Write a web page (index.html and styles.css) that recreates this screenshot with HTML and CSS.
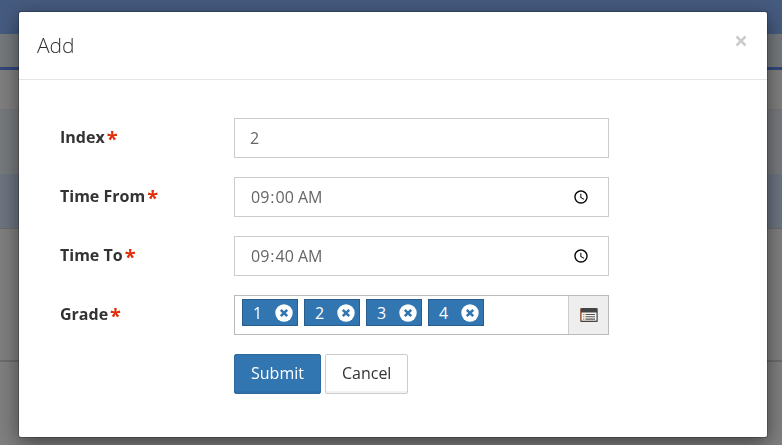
FILE: index.html
```
<!DOCTYPE html>
<html lang="en-US">
<head>
  <meta charset="UTF-8">
  <title>Add</title>
  <link rel="stylesheet" href="styles.css">
</head>
<body>
  <div class="page" aria-hidden="true">
    <div class="page-header"></div>
    <div class="page-nav"></div>
    <div class="page-row title-row"></div>
    <div class="page-row filter-row"></div>
    <div class="page-row selected-row"></div>
    <div class="page-row list-row"></div>
    <div class="page-row"></div>
  </div>

  <div class="modal" role="dialog" aria-labelledby="modal-title">
    <div class="modal-header">
      <h1 class="modal-title" id="modal-title">Add</h1>
      <button type="button" class="close" aria-label="Close">
        <svg width="12" height="12" viewBox="0 0 12 12"><path d="M1.5 1.5l9 9M10.5 1.5l-9 9" fill="none" stroke="currentColor" stroke-width="2.6"/></svg>
      </button>
    </div>

    <form class="modal-body">
      <div class="form-group">
        <label class="form-label" for="index">Index<span class="required">*</span></label>
        <input class="form-control" id="index" type="text" value="2">
      </div>
      <div class="form-group">
        <label class="form-label" for="time-from">Time From<span class="required">*</span></label>
        <input class="form-control" id="time-from" type="time" value="09:00">
      </div>
      <div class="form-group">
        <label class="form-label" for="time-to">Time To<span class="required">*</span></label>
        <input class="form-control" id="time-to" type="time" value="09:40">
      </div>
      <div class="form-group">
        <label class="form-label" for="grade">Grade<span class="required">*</span></label>
        <div class="tag-control">
          <div class="tags">
            <span class="tag">1
              <button type="button" class="tag-remove" aria-label="Remove 1"><svg width="18" height="18" viewBox="0 0 18 18"><circle cx="9" cy="9" r="8.7" fill="#fff"/><path d="M5.8 5.8l6.4 6.4M12.2 5.8l-6.4 6.4" stroke="#3276b1" stroke-width="2.6"/></svg></button>
            </span>
            <span class="tag">2
              <button type="button" class="tag-remove" aria-label="Remove 2"><svg width="18" height="18" viewBox="0 0 18 18"><circle cx="9" cy="9" r="8.7" fill="#fff"/><path d="M5.8 5.8l6.4 6.4M12.2 5.8l-6.4 6.4" stroke="#3276b1" stroke-width="2.6"/></svg></button>
            </span>
            <span class="tag">3
              <button type="button" class="tag-remove" aria-label="Remove 3"><svg width="18" height="18" viewBox="0 0 18 18"><circle cx="9" cy="9" r="8.7" fill="#fff"/><path d="M5.8 5.8l6.4 6.4M12.2 5.8l-6.4 6.4" stroke="#3276b1" stroke-width="2.6"/></svg></button>
            </span>
            <span class="tag">4
              <button type="button" class="tag-remove" aria-label="Remove 4"><svg width="18" height="18" viewBox="0 0 18 18"><circle cx="9" cy="9" r="8.7" fill="#fff"/><path d="M5.8 5.8l6.4 6.4M12.2 5.8l-6.4 6.4" stroke="#3276b1" stroke-width="2.6"/></svg></button>
            </span>
            <input class="tag-input" id="grade" type="text">
          </div>
          <button type="button" class="addon" aria-label="Choose grades">
            <svg width="18" height="14" viewBox="0 0 18 14">
              <rect width="18" height="14" rx="1.5" fill="#444"/>
              <path d="M.5 1v12" stroke="#a0684a"/>
              <path d="M17.5 1v12" stroke="#4a7fa8"/>
              <path d="M1.5 4.5h15v8.2h-15z" fill="#f6f4f0"/>
              <path d="M3 6.5h1.4M3 8.8h1.4M3 11.1h1.4" stroke="#b8834f" stroke-width="1.1"/>
              <path d="M5.5 6.5H15M5.5 8.8H15M5.5 11.1H15" stroke="#555" stroke-width="1.1"/>
            </svg>
          </button>
        </div>
      </div>
      <div class="form-actions">
        <button type="submit" class="btn btn-primary">Submit</button>
        <button type="button" class="btn btn-default">Cancel</button>
      </div>
    </form>
  </div>
</body>
</html>
```
FILE: styles.css
```
* {
  box-sizing: border-box;
}

body {
  margin: 0;
  font-family: 'Open Sans', 'Noto Sans', sans-serif;
  font-size: 16px;
  line-height: 24px;
  color: #333;
  background: #7f7f7f;
}

button,
input {
  font: inherit;
}

/* Dimmed page behind the dialog */
.page {
  position: fixed;
  inset: 0;
  overflow: hidden;
}

.page-header {
  height: 34px;
  background: #465b80;
}

.page-nav {
  height: 36px;
  background: #75797c;
  border-bottom: 3px solid #34477a;
}

.page-row {
  border-bottom: 1px solid #6b6b6b;
}

.title-row {
  height: 40px;
  border-color: #757575;
}

.filter-row {
  height: 64px;
  background: #777a7d;
  border: 0;
}

.selected-row {
  height: 55px;
  background: #6c7480;
}

.list-row {
  height: 132px;
}

/* Dialog */
.modal {
  position: relative;
  margin: 12px 15px 8px 19px;
  background: #fff;
  border-radius: 2px;
  box-shadow: 0 0 0 1px rgba(0, 0, 0, 0.2), 0 5px 20px rgba(0, 0, 0, 0.5);
}

.modal-header {
  display: flex;
  align-items: flex-start;
  justify-content: space-between;
  padding: 17px 20px 18px 18px;
  border-bottom: 1px solid #e5e5e5;
}

.modal-title {
  margin: 0;
  font-size: 21px;
  font-weight: 300;
  line-height: 32px;
}

.close {
  display: flex;
  padding: 6px 0;
  border: 0;
  background: none;
  color: #ccc;
}

.modal-body {
  display: flex;
  flex-direction: column;
  gap: 19px;
  padding: 38px 41px 43px;
}

.form-group {
  display: flex;
  align-items: center;
}

.form-label {
  flex: 0 0 174px;
  font-weight: 700;
}

.required {
  margin-left: 2px;
  font-size: 20px;
  font-weight: 700;
  line-height: 24px;
  vertical-align: middle;
  color: #e02f0a;
}

.form-control,
.tag-control {
  flex: 0 1 375px;
  min-width: 0;
  height: 40px;
  border: 1px solid #ccc;
  background: #fff;
}

.form-control {
  padding: 6px 15px;
  color: #666;
}

.tag-control {
  display: flex;
  border-color: #bbb;
}

.tags {
  display: flex;
  flex: 1;
  gap: 6px;
  min-width: 0;
  padding: 3px 7px;
}

.tag {
  display: flex;
  flex: none;
  align-items: center;
  justify-content: space-between;
  width: 56px;
  height: 27px;
  padding: 0 4px 0 10px;
  border: 1px solid #285e8e;
  background: #3276b1;
  color: #fff;
}

.tag-remove {
  display: flex;
  padding: 0;
  border: 0;
  background: none;
}

.tag-input {
  flex: 1;
  min-width: 0;
  padding: 0;
  border: 0;
  outline: 0;
}

.addon {
  display: flex;
  align-items: center;
  justify-content: center;
  width: 40px;
  padding: 0;
  border: 0;
  border-left: 1px solid #ccc;
  background: #eee;
}

.form-actions {
  display: flex;
  gap: 4px;
  padding-left: 174px;
}

.btn {
  height: 40px;
  padding: 0 16px 2px;
  border: 1px solid #ccc;
  border-radius: 2px;
  box-shadow: inset 0 -2px 0 rgba(0, 0, 0, 0.05);
}

.btn-primary {
  border-color: #2c699d;
  background: #3276b1;
  color: #fff;
}

.btn-default {
  background: #fff;
  color: #333;
}
```
